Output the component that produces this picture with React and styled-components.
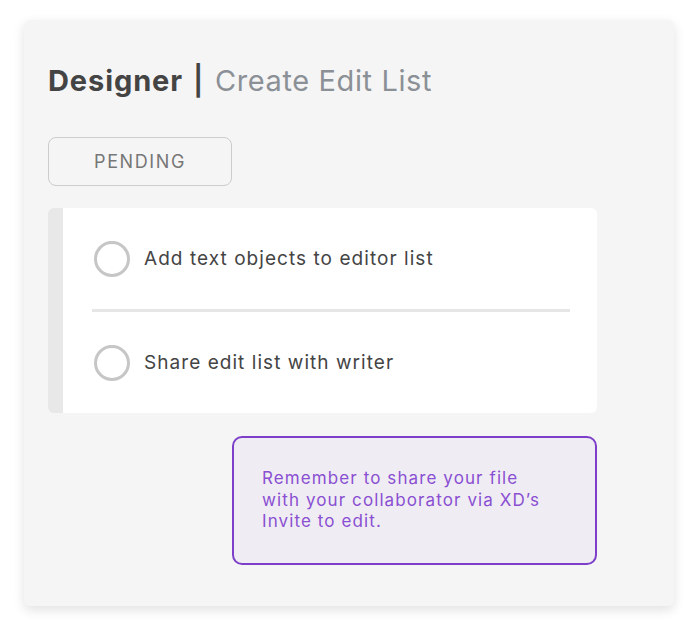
import React from "react";
import styled, { createGlobalStyle } from "styled-components";

const GlobalStyle = createGlobalStyle`
  body {
    margin: 0;
    background: #ffffff;
    font-family: Inter, "Noto Sans", sans-serif;
  }
`;

const tasks = ["Add text objects to editor list", "Share edit list with writer"];

const App = () => {
  return (
    <>
      <GlobalStyle />
      <Page>
        <Card>
          <Title>
            <Role>Designer</Role>
            <Bar>|</Bar>
            <Step>Create Edit List</Step>
          </Title>
          <StatusButton>PENDING</StatusButton>
          <Column>
            <TaskList>
              {tasks.map((text, i) => (
                <React.Fragment key={text}>
                  {i > 0 && <Divider />}
                  <TaskRow>
                    <Check />
                    <TaskText>{text}</TaskText>
                  </TaskRow>
                </React.Fragment>
              ))}
            </TaskList>
            <Note>
              Remember to share your file
              <br />
              with your collaborator via XD’s
              <br />
              Invite to edit.
            </Note>
          </Column>
        </Card>
      </Page>
    </>
  );
};

export const Page = styled.div`
  padding: 20px 24px 29px 24px;
`;

export const Card = styled.div`
  width: 650px;
  height: 586px;
  box-sizing: border-box;
  background: #f5f5f5;
  border-radius: 6px;
  box-shadow: 0 4px 12px rgba(0, 0, 0, 0.12);
  padding: 44px 24px 0 24px;
`;

export const Title = styled.div`
  display: flex;
  align-items: baseline;
  font-size: 29px;
  line-height: 34px;
  letter-spacing: 0.6px;
`;

export const Role = styled.span`
  font-weight: 700;
  color: #444444;
  letter-spacing: 0.9px;
`;

export const Bar = styled.span`
  font-weight: 600;
  color: #444444;
  margin: 0 11px 0 10px;
`;

export const Step = styled.span`
  font-weight: 400;
  color: #8b9096;
`;

export const StatusButton = styled.div`
  margin-top: 39px;
  width: 184px;
  height: 49px;
  box-sizing: border-box;
  border: 1.5px solid #cccccc;
  border-radius: 8px;
  display: flex;
  align-items: center;
  justify-content: center;
  font-size: 18px;
  color: #777777;
  letter-spacing: 1.6px;
`;

export const Column = styled.div`
  width: 549px;
  margin-top: 22px;
  display: flex;
  flex-direction: column;
  align-items: flex-end;
  gap: 23px;
`;

export const TaskList = styled.div`
  width: 100%;
  box-sizing: border-box;
  background: #ffffff;
  border-radius: 6px;
  border-left: 15px solid #e8e8e8;
  padding: 0 27px 0 29px;
`;

export const TaskRow = styled.div`
  height: 101px;
  display: flex;
  align-items: center;
  gap: 14px;
  padding-left: 2px;
`;

export const Check = styled.div`
  width: 36px;
  height: 36px;
  box-sizing: border-box;
  border: 3px solid #c6c6c6;
  border-radius: 50%;
  flex-shrink: 0;
`;

export const TaskText = styled.span`
  font-size: 19px;
  color: #444444;
  letter-spacing: 1.05px;
`;

export const Divider = styled.div`
  height: 3px;
  background: #e6e6e6;
`;

export const Note = styled.div`
  width: 365px;
  height: 129px;
  box-sizing: border-box;
  border: 2px solid #7d3fc9;
  border-radius: 10px;
  background: #efedf3;
  padding: 30px 10px 0 28px;
  font-size: 17px;
  line-height: 21.5px;
  letter-spacing: 1.1px;
  color: #8a4fd2;
`;

export default App;
